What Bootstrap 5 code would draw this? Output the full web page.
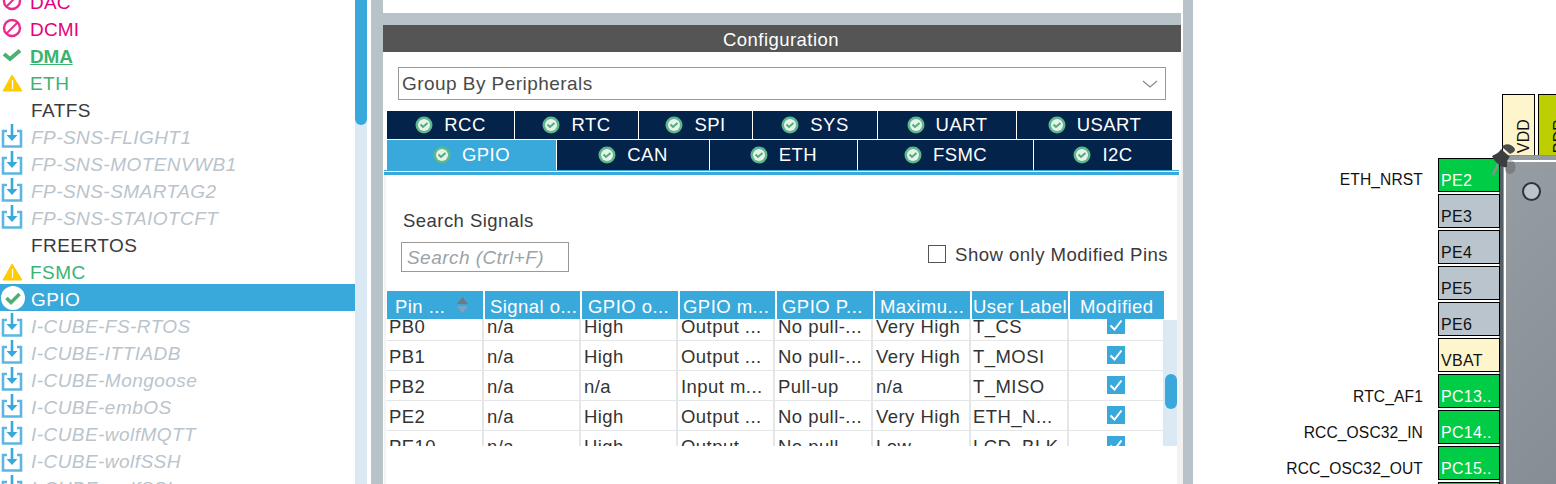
<!DOCTYPE html>
<html lang="en"><head><meta charset="utf-8"><title>Pinout</title>
<link rel="stylesheet" href="https://cdn.jsdelivr.net/npm/bootstrap@5.3.0/dist/css/bootstrap.min.css">
<style>
html,body{height:484px;overflow:hidden;background:#fff}
body{font-family:"Liberation Sans",Arial,sans-serif;font-size:18.5px;color:#3b3b3b;letter-spacing:.45px}
.shell{height:484px;width:1556px;overflow:hidden}
.leftpane{width:367px;height:484px;position:relative;overflow:hidden;flex:none;font-size:19px}
.leftlist{width:355px;margin-top:-13px}
.lrow{height:27px;line-height:32px;padding-left:31px;position:relative;white-space:nowrap}
.lrow svg{position:absolute;left:1px;top:2px;width:22px;height:24px}
.r-red{color:#e6007e;padding-left:30px;letter-spacing:.2px}.r-green{color:#3cb371;padding-left:30px}.r-dis{color:#bac4cc;font-style:italic}
.r-under{font-weight:700;text-decoration:underline;letter-spacing:-.2px}
.r-sel{background:#39a9dc;color:#fff}
.lrow svg.selicon{left:1px;top:2px;width:24px;height:24px}
.track{position:absolute;right:0;top:0;width:12px;height:484px;background:#dbe9f5}
.thumb{width:12px;height:125px;background:#39a9dc;border-radius:0 0 6px 6px}
.gutter{width:4px;flex:none}
.greybar{width:12px;height:484px;background:#b8c3c9;flex:none}
.greybar.narrow{width:10px}
.midcol{width:800px;height:484px;background:#fff;display:flex;flex-direction:column;flex:none}
.midtop{height:13px;flex:none}
.midgap{height:12px;width:798px;background:#b8c3c9;flex:none}
.midhead{height:27px;line-height:29px;width:798px;background:#545554;color:#fff;text-align:center;flex:none;letter-spacing:.45px;padding-right:2px}
.midbody{width:800px;flex:1;background:#fff;border-right:2px solid #f2f2f2;min-height:0}
.combo{margin:15px 0 0 15px;width:768px;height:33px;border:1px solid #999;line-height:35px;padding-left:3px;display:flex;justify-content:space-between;align-items:center;color:#4a4a4a;font-size:19px}
.combo svg{margin-right:7px;margin-top:2px}
.tabs{margin:11px 0 0 4px;width:785px}
.tabrow{display:flex;background:#03234b;color:#fff;height:28px}
.tabrow.two{height:31px;border-top:1px solid #fff}
.tabcell{display:flex;align-items:center;justify-content:center;gap:11px;border-left:1px solid #fff;white-space:nowrap;flex:none;line-height:30px}
.tabcell:first-child{border-left:0}
.tabcell.on{background:#39a9dc}
.tabcell svg{width:18px;height:18px;flex:none}
.tabrow.one .tabcell:nth-child(1){width:127px}
.tabrow.one .tabcell:nth-child(2){width:124px}
.tabrow.one .tabcell:nth-child(3){width:114px}
.tabrow.one .tabcell:nth-child(4){width:125px}
.tabrow.one .tabcell:nth-child(5){width:139px}
.tabrow.one .tabcell:nth-child(6){width:156px}
.tabrow.two .tabcell:nth-child(1){width:169px}
.tabrow.two .tabcell:nth-child(2){width:153px}
.tabrow.two .tabcell:nth-child(3){width:148px}
.tabrow.two .tabcell:nth-child(4){width:176px}
.tabrow.two .tabcell:nth-child(5){width:139px}
.tabline{margin-left:1px;width:795px;height:5px;border-top:1px solid #39a9dc;border-bottom:3px solid #39a9dc;background:#fff}
.lowpane{margin-left:1px;width:797px;background:#fff;border-left:2px solid #f4f4f4;border-right:4px solid #f2f2f2;height:309px;padding-top:35px}
.searchlbl{margin-left:17px;line-height:22px}
.filterline{display:flex;justify-content:space-between;align-items:center;margin:10px 0 0 15px;height:30px;padding-right:9px}
.searchbox{width:168px;height:30px;border:1px solid #999;line-height:29px;padding-left:5px;font-style:italic;color:#9aa3a9;font-size:19px}
.modpin{display:flex;align-items:center;gap:9px;margin-top:-5px;white-space:nowrap;font-size:18.6px}
.modbox{width:18px;height:18px;border:1px solid #555;background:#fff;display:block;margin-top:-1px}
.gridhead{display:flex;gap:2px;margin:19px 0 0 1px;color:#fff;height:28px;line-height:32px;white-space:nowrap}
.gridhead>div{background:#39a9dc;overflow:hidden;position:relative;flex:none}
.gridhead>div:nth-child(1){width:96px;padding-left:8px}
.gridhead>div:nth-child(2){width:95px;padding-left:5px}
.gridhead>div:nth-child(3){width:96px;padding-left:6px}
.gridhead>div:nth-child(4){width:95px;padding-left:3px}
.gridhead>div:nth-child(5){width:96px;padding-left:5px}
.gridhead>div:nth-child(6){width:95px;padding-left:5px}
.gridhead>div:nth-child(7){width:96px;padding-left:1px}
.gridhead>div:nth-child(8){width:94px;padding-left:10px}
.sorter{position:absolute;left:70px;top:6px}
.gridbody{height:127px;overflow:hidden;position:relative;width:791px}
.gridrows{margin-top:-8px;width:777px}
.gridrow{display:flex;height:30px;line-height:31px;border-bottom:1px solid #e5e6e8;color:#333;white-space:nowrap}
.gridrow>div{border-right:2px solid #e5e6e8;padding-left:3px;overflow:hidden;flex:none}
.gridrow>div:nth-child(1){width:98px}
.gridrow>div:nth-child(2),.gridrow>div:nth-child(3),.gridrow>div:nth-child(4){width:97px}
.gridrow>div:nth-child(5){width:98px}
.gridrow>div:nth-child(6){width:98px}
.gridrow>div:nth-child(7){width:98px;padding-left:2px}
.gridrow>div:nth-child(8){width:94px;border-right:0;padding-left:38px}
.tick{width:18px;height:18px;display:block;margin-top:5px}
.gtrack{position:absolute;right:0;top:1px;bottom:0;width:14px;background:#dbe9f5}
.gthumb{position:absolute;top:54px;left:2px;width:12px;height:35px;background:#39a9dc;border-radius:6px}
.pinout{flex:1;height:484px;position:relative;overflow:hidden;color:#111;font-size:15.6px;letter-spacing:.12px;min-width:0}
.chip{position:absolute;left:306px;top:155px;width:70px;height:340px;background:linear-gradient(135deg,#969da3,#858c93);border-left:4px solid #555f68;border-top:1px solid #8a9198}
.chipedge{position:absolute;left:1px;top:4px;width:70px;height:340px;border-left:2px solid #fff;border-top:2px solid #fff}
.dot{position:absolute;left:19px;top:26px;width:19px;height:19px;border-radius:50%;background:#b9c4cc;border:2px solid #2f3438}
.pincol{position:absolute;left:245px;top:158px;width:62px;display:flex;flex-direction:column;gap:2px}
.ppin{height:34px;flex:none;border:1.500px solid #000;background:#b9c4cc;line-height:19px;padding:12px 0 0 2px;font-size:16px;white-space:nowrap;overflow:hidden;letter-spacing:.3px}
.ppin.g{background:#00cd45;color:#fff}
.ppin.y{background:#fff5cc}
.siglbl{position:absolute;right:133px;height:34px;line-height:19px;padding-top:13px;white-space:nowrap}
.s1{top:157px}.s2{top:374px}.s3{top:410px}.s4{top:446px}
.toppin{position:absolute;top:94px;width:33px;height:62px;border:1.500px solid #000;overflow:hidden;font-size:16px}
.toppin.a{left:309px;background:#fff5cc}
.toppin.b{left:345px;background:#bdcf00}
.toppin span{position:absolute;bottom:2px;left:12px;writing-mode:vertical-rl;transform:rotate(180deg);line-height:18px}
.pushpin{position:absolute;left:295px;top:141px}
</style></head><body>
<svg width="0" height="0" class="position-absolute"><defs>
<symbol id="dl" viewBox="0 0 22 24"><path d="M6 7H2v15.500h18V7h-4" fill="none" stroke="#5cb6e4" stroke-width="2.600"/><path d="M11 0v13" stroke="#39a9dc" stroke-width="2.600"/><path d="M5.500 11h11L11 17z" fill="#39a9dc"/></symbol>
<symbol id="no" viewBox="0 0 22 24"><circle cx="11" cy="12" r="8" fill="none" stroke="#ea2a8f" stroke-width="2.400"/><path d="M5.500 17.500 16.500 6.500" stroke="#ea2a8f" stroke-width="2"/></symbol>
<symbol id="ok" viewBox="0 0 22 24"><path d="M3 11 9 16 19 7.500" fill="none" stroke="#4cb073" stroke-width="4"/></symbol>
<symbol id="warn" viewBox="0 0 22 24"><path d="M11 5 21 21H2z" fill="#ffcb05" stroke="#ffcb05" stroke-linejoin="round"/><path d="M11.500 10v9" stroke="#fff" stroke-width="1.200"/></symbol>
<symbol id="tabok" viewBox="0 0 18 18"><circle cx="9" cy="9" r="8.500" fill="#5cb98a"/><circle cx="9" cy="9" r="6" fill="#e9f1ee"/><path d="M5.500 8.500 8 11l4.500-4" fill="none" stroke="#4cb073" stroke-width="2"/></symbol>
<symbol id="tickbox" viewBox="0 0 18 18"><rect width="18" height="18" fill="#39a9dc"/><path d="M3.500 9.500 7.500 13.500 14.500 4.500" fill="none" stroke="#fff" stroke-width="2"/></symbol>
</defs></svg>
<div class="shell d-flex">
 <div class="leftpane">
  <div class="leftlist">
   <div class="lrow r-red"><svg><use href="#no"/></svg>DAC</div>
   <div class="lrow r-red"><svg><use href="#no"/></svg>DCMI</div>
   <div class="lrow r-green r-under"><svg><use href="#ok"/></svg>DMA</div>
   <div class="lrow r-green"><svg><use href="#warn"/></svg>ETH</div>
   <div class="lrow">FATFS</div>
   <div class="lrow r-dis"><svg><use href="#dl"/></svg>FP-SNS-FLIGHT1</div>
   <div class="lrow r-dis"><svg><use href="#dl"/></svg>FP-SNS-MOTENVWB1</div>
   <div class="lrow r-dis"><svg><use href="#dl"/></svg>FP-SNS-SMARTAG2</div>
   <div class="lrow r-dis"><svg><use href="#dl"/></svg>FP-SNS-STAIOTCFT</div>
   <div class="lrow">FREERTOS</div>
   <div class="lrow r-green"><svg><use href="#warn"/></svg>FSMC</div>
   <div class="lrow r-sel"><svg class="selicon" viewBox="0 0 24 24"><circle cx="12" cy="12" r="12" fill="#fff"/><path d="M5.500 12 10 16.500 18.500 8" fill="none" stroke="#4cb073" stroke-width="3.500"/></svg>GPIO</div>
   <div class="lrow r-dis"><svg><use href="#dl"/></svg>I-CUBE-FS-RTOS</div>
   <div class="lrow r-dis"><svg><use href="#dl"/></svg>I-CUBE-ITTIADB</div>
   <div class="lrow r-dis"><svg><use href="#dl"/></svg>I-CUBE-Mongoose</div>
   <div class="lrow r-dis"><svg><use href="#dl"/></svg>I-CUBE-embOS</div>
   <div class="lrow r-dis"><svg><use href="#dl"/></svg>I-CUBE-wolfMQTT</div>
   <div class="lrow r-dis"><svg><use href="#dl"/></svg>I-CUBE-wolfSSH</div>
   <div class="lrow r-dis"><svg><use href="#dl"/></svg>I-CUBE-wolfSSL</div>
  </div>
  <div class="track"><div class="thumb"></div></div>
 </div>
 <div class="gutter"></div>
 <div class="greybar"></div>
 <div class="midcol">
  <div class="midtop"></div><div class="midgap"></div>
  <div class="midhead">Configuration</div>
  <div class="midbody">
   <div class="combo"><span>Group By Peripherals</span><svg width="16" height="9" viewBox="0 0 16 9"><path d="M1 1l7 6 7-6" fill="none" stroke="#888" stroke-width="1.200"/></svg></div>
   <div class="tabs">
    <div class="tabrow one">
     <div class="tabcell"><svg><use href="#tabok"/></svg>RCC</div>
     <div class="tabcell"><svg><use href="#tabok"/></svg>RTC</div>
     <div class="tabcell"><svg><use href="#tabok"/></svg>SPI</div>
     <div class="tabcell"><svg><use href="#tabok"/></svg>SYS</div>
     <div class="tabcell"><svg><use href="#tabok"/></svg>UART</div>
     <div class="tabcell"><svg><use href="#tabok"/></svg>USART</div>
    </div>
    <div class="tabrow two">
     <div class="tabcell on"><svg><use href="#tabok"/></svg>GPIO</div>
     <div class="tabcell"><svg><use href="#tabok"/></svg>CAN</div>
     <div class="tabcell"><svg><use href="#tabok"/></svg>ETH</div>
     <div class="tabcell"><svg><use href="#tabok"/></svg>FSMC</div>
     <div class="tabcell"><svg><use href="#tabok"/></svg>I2C</div>
    </div>
   </div>
   <div class="tabline"></div>
   <div class="lowpane">
    <div class="searchlbl">Search Signals</div>
    <div class="filterline">
     <div class="searchbox">Search (Ctrl+F)</div>
     <label class="modpin"><span class="modbox"></span>Show only Modified Pins</label>
    </div>
    <div class="gridhead">
     <div>Pin ...<svg class="sorter" width="11" height="16" viewBox="0 0 11 16"><path d="M5.500 0l5.500 7H0z" fill="#6b7b85"/><path d="M0 9h11l-5.500 7z" fill="#7fa3bf"/></svg></div>
     <div>Signal o...</div>
     <div>GPIO o...</div>
     <div>GPIO m...</div>
     <div>GPIO P...</div>
     <div>Maximu...</div>
     <div>User Label</div>
     <div>Modified</div>
    </div>
    <div class="gridbody">
     <div class="gridrows">
     <div class="gridrow"><div>PB0</div><div>n/a</div><div>High</div><div>Output ...</div><div>No pull-...</div><div>Very High</div><div>T_CS</div><div><svg class="tick"><use href="#tickbox"/></svg></div></div>
     <div class="gridrow"><div>PB1</div><div>n/a</div><div>High</div><div>Output ...</div><div>No pull-...</div><div>Very High</div><div>T_MOSI</div><div><svg class="tick"><use href="#tickbox"/></svg></div></div>
     <div class="gridrow"><div>PB2</div><div>n/a</div><div>n/a</div><div>Input m...</div><div>Pull-up</div><div>n/a</div><div>T_MISO</div><div><svg class="tick"><use href="#tickbox"/></svg></div></div>
     <div class="gridrow"><div>PE2</div><div>n/a</div><div>High</div><div>Output ...</div><div>No pull-...</div><div>Very High</div><div>ETH_N...</div><div><svg class="tick"><use href="#tickbox"/></svg></div></div>
     <div class="gridrow"><div>PE10</div><div>n/a</div><div>High</div><div>Output ...</div><div>No pull-...</div><div>Low</div><div>LCD_BLK</div><div><svg class="tick"><use href="#tickbox"/></svg></div></div>
     </div>
     <div class="gtrack"><div class="gthumb"></div></div>
    </div>
   </div>
  </div>
 </div>
 <div class="greybar narrow"></div>
 <div class="pinout">
  <div class="toppin a"><span>VDD</span></div>
  <div class="toppin b"><span>PDR</span></div>
  <div class="chip"><div class="chipedge"></div><div class="dot"></div></div>
  <div class="siglbl s1">ETH_NRST</div>
  <div class="siglbl s2">RTC_AF1</div>
  <div class="siglbl s3">RCC_OSC32_IN</div>
  <div class="siglbl s4">RCC_OSC32_OUT</div>
  <div class="pincol">
   <div class="ppin g">PE2</div><div class="ppin">PE3</div><div class="ppin">PE4</div><div class="ppin">PE5</div><div class="ppin">PE6</div><div class="ppin y">VBAT</div><div class="ppin g">PC13..</div><div class="ppin g">PC14..</div><div class="ppin g">PC15..</div><div class="ppin g"></div>
  </div>
  <svg class="pushpin" width="30" height="36" viewBox="0 0 30 36"><ellipse cx="22" cy="26" rx="5.500" ry="7" fill="#555" opacity=".4"/><path d="M10 23 5 34" stroke="#8c9093" stroke-width="2.500"/><path d="M4 15C8 13 12 11 13 8L22 16C19 18 19 22 19 26 14 27 7 22 4 15Z" fill="#3b3e41"/><path d="M14 6C16 2 24 2 27 8 27 11 24 12 22 13Z" fill="#4a4d50"/></svg>
 </div>
</div>
<script src="https://cdn.jsdelivr.net/npm/bootstrap@5.3.0/dist/js/bootstrap.bundle.min.js"></script>
</body></html>
